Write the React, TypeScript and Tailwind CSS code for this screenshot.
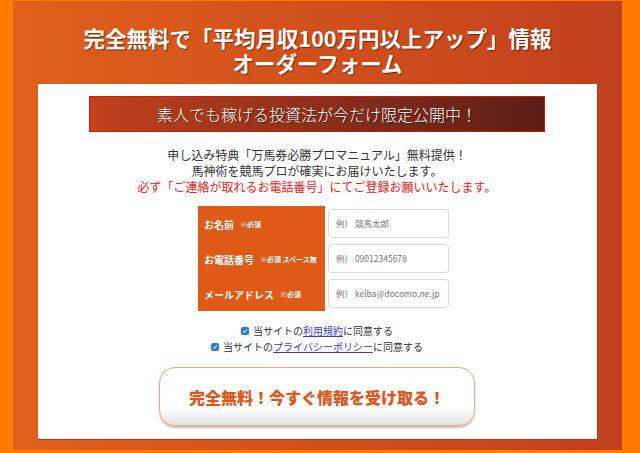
const jp = { fontFamily: '"Noto Sans CJK JP", "Noto Sans", sans-serif' };

const fields = [
  { label: "お名前", note: "※必須", placeholder: "例） 競馬太郎" },
  { label: "お電話番号", note: "※必須 スペース無", placeholder: "例） 09012345678" },
  { label: "メールアドレス", note: "※必須", placeholder: "例） keiba@docomo.ne.jp" },
];

function Check({ children }: { children: React.ReactNode }) {
  return (
    <label className="flex items-center gap-[4px] text-[10px] leading-[16px] text-[#333]">
      <span className="flex h-[8px] w-[8px] items-center justify-center rounded-[2px] bg-[#2a7ae2]">
        <svg viewBox="0 0 8 8" className="h-[6px] w-[6px]">
          <path d="M1.5 4.2 L3.2 5.8 L6.5 2" fill="none" stroke="white" strokeWidth="1.4" />
        </svg>
      </span>
      <span>{children}</span>
    </label>
  );
}

export default function App() {
  return (
    <main className="h-[453px] w-[640px] bg-[#ff7b00] pt-[1px]" style={jp}>
      <div className="ml-[13px] flex h-[449px] w-[609px] flex-col items-center bg-gradient-to-r from-[#e0601b] to-[#c1401e] px-[25px]">
        <h1
          className="mt-[24px] flex flex-col items-center text-[21.5px] font-bold leading-[25px] text-white"
          style={{ textShadow: "1px 1px 1px rgba(80,20,0,0.7)" }}
        >
          <span>完全無料で「平均月収100万円以上アップ」情報</span>
          <span>オーダーフォーム</span>
        </h1>

        <div className="mt-[9px] flex h-[356px] w-[560px] flex-col items-center border-r border-b border-[#d42a1a] bg-white pt-[12px]">
          <div
            className="flex h-[36px] w-[456px] items-center justify-center border border-[#c91c10] bg-gradient-to-r from-[#c2421c] to-[#5b1e15] text-[16px] font-light text-white"
            style={{ textShadow: "1px 1px 1px rgba(0,0,0,0.5)" }}
          >
            素人でも稼げる投資法が今だけ限定公開中！
          </div>

          <div className="mt-[15px] text-center text-[12px] leading-[16px] text-[#333]">
            <p>申し込み特典「万馬券必勝プロマニュアル」無料提供！</p>
            <p>馬神術を競馬プロが確実にお届けいたします。</p>
            <p className="text-[#f0201a]">必ず「ご連絡が取れるお電話番号」にてご登録お願いいたします。</p>
          </div>

          <div className="mt-[11px] ml-[13px] flex">
            <div className="flex w-[127px] flex-col bg-[#e05a17]">
              {fields.map((f) => (
                <div key={f.label} className="flex h-[35px] items-center pl-[6px] pt-[2px] text-white">
                  <span className="text-[10px] font-bold">{f.label}</span>
                  <span className="ml-[6px] text-[7px] font-bold">{f.note}</span>
                </div>
              ))}
            </div>
            <div className="ml-[3px] flex flex-col">
              {fields.map((f) => (
                <div key={f.label} className="flex h-[35px] items-center">
                  <div className="flex h-[29px] w-[121px] items-center rounded-[3px] border border-[#dcdcdc] bg-white pl-[7px] text-[8.5px] text-[#777]">
                    {f.placeholder}
                  </div>
                </div>
              ))}
            </div>
          </div>

          <div className="mt-[12px] flex flex-col items-center">
            <Check>
              当サイトの<span className="text-[#3b3bd6] underline">利用規約</span>に同意する
            </Check>
            <Check>
              当サイトの<span className="text-[#3b3bd6] underline">プライバシーポリシー</span>に同意する
            </Check>
          </div>

          <button
            className="mt-[12px] flex h-[59px] w-[316px] items-center justify-center rounded-[16px] border border-[#f2a58a] bg-gradient-to-b from-white from-70% to-[#e2e2e2] text-[16px] font-black text-[#e0561a]"
            style={{ boxShadow: "0 2px 2px rgba(0,0,0,0.25)" }}
          >
            完全無料！今すぐ情報を受け取る！
          </button>
        </div>
      </div>
    </main>
  );
}
